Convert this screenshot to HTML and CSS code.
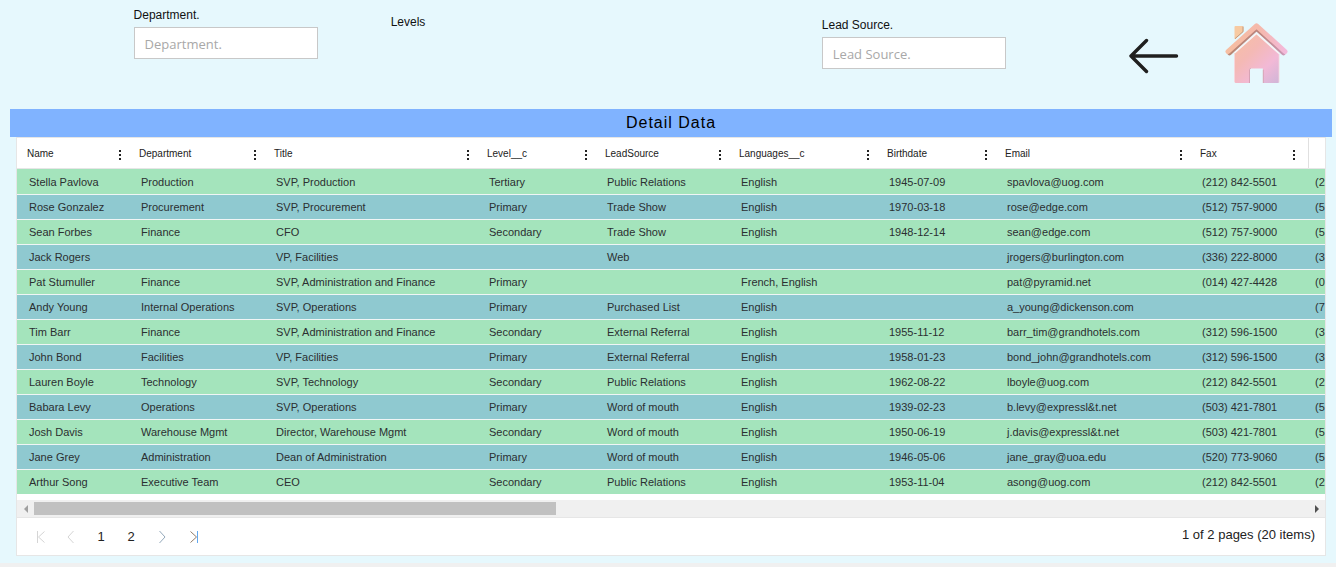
FILE: index.html
```
<!DOCTYPE html>
<html lang="en">
<head>
<meta charset="utf-8">
<title>Detail Data</title>
<link rel="stylesheet" href="styles.css">
</head>
<body>
<header class="filters">
  <div class="field field-department">
    <label for="department">Department.</label>
    <input id="department" type="text" placeholder="Department.">
  </div>
  <div class="levels">Levels</div>
  <div class="field field-source">
    <label for="source">Lead Source.</label>
    <input id="source" type="text" placeholder="Lead Source.">
  </div>
  <button class="nav-button nav-back" type="button" aria-label="Back">
    <svg width="50" height="38" viewBox="0 0 50 38" fill="none" stroke="#20201f" stroke-width="3.4" stroke-linecap="round" stroke-linejoin="round"><path d="M2 19H47.500M17.500 3.500L2 19L17.500 34.500"/></svg>
  </button>
  <button class="nav-button nav-home" type="button" aria-label="Home">
    <svg width="64" height="64" viewBox="0 0 64 64">
      <defs>
        <linearGradient id="wall" x1="0.1" y1="0" x2="1" y2="1"><stop offset="0" stop-color="#f6bfa5"/><stop offset=".35" stop-color="#f4b9b5"/><stop offset=".68" stop-color="#f2b9d6"/><stop offset="1" stop-color="#d0b5d8"/></linearGradient>
        <linearGradient id="roof" x1="0" y1="0" x2="1" y2="0"><stop offset="0" stop-color="#f6bea2"/><stop offset=".55" stop-color="#f5b9ab"/><stop offset="1" stop-color="#f3b9da"/></linearGradient>
        <linearGradient id="edge" x1="0" y1="0" x2="1" y2="0"><stop offset="0" stop-color="#b98673"/><stop offset=".6" stop-color="#bd8580"/><stop offset="1" stop-color="#cb98b5"/></linearGradient>
      </defs>
      <path d="M9.500 5Q9.500 4 10.500 4H17.500L18.500 5V9.500L10.500 17H9.500Z" fill="#f7caa2"/>
      <path d="M18 4.500V9.700L10 16.700" fill="none" stroke="#c39a80"/>
      <path d="M4.500 31L31.500 6.500L58.500 31" fill="none" stroke="url(#edge)" stroke-width="4.500" stroke-linecap="round" stroke-linejoin="round"/>
      <path d="M3 29.500L31.500 3.800L60 29.500" fill="none" stroke="url(#roof)" stroke-width="5" stroke-linecap="round" stroke-linejoin="round"/>
      <path d="M9.500 31L31.500 11.500L54 31.500V60Q54 61 53 61H38.300V47.500Q38.300 46.500 37.300 46.500H25.500Q24.500 46.500 24.500 47.500V61H11Q9.500 61 9.500 59.500Z" fill="url(#wall)"/>
      <path d="M9.500 31L31.500 11.500L54 31.500" fill="none" stroke="#f7f4f6" stroke-width="1.400"/>
      <path d="M9.500 32V60M54 32V60.500" fill="none" stroke="#f7d6dc" stroke-width=".8"/>
      <path d="M24.500 61V47.700Q24.500 46.500 25.700 46.500M38.300 47.500V61" fill="none" stroke="#d49caf" stroke-width=".9"/>
    </svg>
  </button>
</header>

<main class="report">
  <h1 class="report-title">Detail Data</h1>
  <section class="grid-panel">
    <div class="grid-view">
      <table class="grid">
        <colgroup><col class="c-name"><col class="c-dept"><col class="c-title"><col class="c-level"><col class="c-source"><col class="c-lang"><col class="c-birth"><col class="c-email"><col class="c-fax"><col class="c-last"></colgroup>
        <thead><tr id="head"></tr></thead>
        <tbody id="rows"></tbody>
      </table>
    </div>
    <div class="scrollbar">
      <span class="arrow arrow-left"></span>
      <div class="track"><div class="thumb"></div></div>
      <span class="arrow arrow-right"></span>
    </div>
    <footer class="pager">
      <nav class="pages" aria-label="Pages">
        <button type="button" disabled aria-label="First page"><svg width="12" height="14" viewBox="0 0 12 14"><path d="M2.500 1V13M9.500 1.500L3.500 7L9.500 12.500"/></svg></button>
        <button type="button" disabled aria-label="Previous page"><svg width="12" height="14" viewBox="0 0 12 14"><path d="M8.500 1L3 7L8.500 13"/></svg></button>
        <button type="button">1</button>
        <button type="button">2</button>
        <button type="button" class="next" aria-label="Next page"><svg width="12" height="14" viewBox="0 0 12 14"><path d="M3.500 1L9 7L3.500 13"/></svg></button>
        <button type="button" class="last" aria-label="Last page"><svg width="12" height="14" viewBox="0 0 12 14"><path d="M2.500 1.500L8.500 7L2.500 12.500"/><path class="bar" d="M9.500 1V13"/></svg></button>
      </nav>
      <span class="summary">1 of 2 pages (20 items)</span>
    </footer>
  </section>
</main>
<div class="page-end"></div>
<script src="grid.js"></script>
</body>
</html>
```
FILE: styles.css
```
* { box-sizing: border-box; }

body {
  margin: 0;
  min-height: 100vh;
  display: flex;
  flex-direction: column;
  background: #e6f8fd;
  color: #111;
  font-family: "Liberation Sans", Arial, sans-serif;
  font-size: 12px;
}

button {
  border: 0;
  padding: 0;
  background: none;
  color: inherit;
  font: inherit;
}

.filters {
  display: grid;
  grid-template-columns: 257fr 431fr 307fr 96fr 111fr;
  align-items: start;
  padding-left: 10%;
  height: 109px;
}

.field {
  display: flex;
  flex-direction: column;
  gap: 4px;
  width: 184px;
  line-height: 16px;
}

.field-department { padding-top: 7px; }
.field-source { padding-top: 17px; }
.levels { padding-top: 14px; line-height: 16px; }

.field input {
  height: 32px;
  padding: 2px 10px 0;
  border: 1px solid #c8c8c8;
  background: #fff;
  font: 13px "Open Sans", "Noto Sans", sans-serif;
}

.field input::placeholder { color: #a8a8a8; opacity: 1; }

.nav-button { justify-self: start; }
.nav-button svg { display: block; }
.nav-back { padding-top: 37px; }
.nav-home { padding-top: 22px; }

.report { margin: 0 4px 0 10px; }

.report-title {
  margin: 0;
  background: #80b3ff;
  color: #000;
  font-size: 16px;
  font-weight: 400;
  line-height: 28px;
  letter-spacing: 1px;
  text-align: center;
}

.grid-panel {
  margin: 0 6px;
  border: 1px solid #e6e6e6;
  background: #fff;
}

.grid-view { overflow: hidden; padding-bottom: 6px; }

.grid {
  width: 100%;
  min-width: 1400px;
  table-layout: fixed;
  border-collapse: separate;
  border-spacing: 0;
}

.c-name { width: 112px; }
.c-dept { width: 135px; }
.c-title { width: 213px; }
.c-level { width: 118px; }
.c-source { width: 134px; }
.c-lang { width: 148px; }
.c-birth { width: 118px; }
.c-email { width: 195px; }
.c-fax { width: 113px; }

.grid th {
  height: 31px;
  padding: 0 6px 0 10px;
  border-bottom: 1px solid #e6e6e6;
  color: #222;
  font-size: 10px;
  font-weight: 400;
  text-align: left;
}

.head-cell {
  display: flex;
  align-items: center;
  justify-content: space-between;
}

.menu { display: grid; height: 14px; padding: 4px 1px 0; }
.menu svg { display: block; }

.grid .head-end { padding: 0 5px; }
.head-end div { height: 30px; border-left: 1px solid #e0e0e0; }

.grid td {
  height: 25px;
  padding: 0 0 0 12px;
  border-top: 1px solid #f0f5f5;
  color: #2b2f31;
  font-size: 11px;
  white-space: nowrap;
}

.grid tbody tr:first-child td { border-top-color: transparent; }
.grid tbody tr:nth-child(odd) { background: #a4e4bc; }
.grid tbody tr:nth-child(even) { background: #8fc9d0; }

.scrollbar {
  display: flex;
  align-items: center;
  height: 17px;
  background: #f0f0f0;
}

.arrow { display: grid; place-items: center; width: 17px; }
.arrow::before { content: ""; border: 4px solid transparent; }
.arrow-left::before { border-left-width: 0; border-right-color: #a0a0a0; }
.arrow-right::before { border-right-width: 0; border-left-color: #505050; }
.track { flex: 1; }
.thumb { width: 41%; height: 13px; background: #c1c1c1; }

.pager {
  display: flex;
  align-items: center;
  justify-content: space-between;
  height: 38px;
  padding: 0 10px 0 7px;
  border-top: 1px solid #e6e6e6;
  color: #222;
  font-size: 13px;
}

.pages { display: flex; }
.pages button { display: grid; place-items: center; width: 30px; height: 30px; padding-left: 4px; }
.pages .next, .pages .last { width: 32px; }
.pages svg { fill: none; stroke: #d5d5d5; }
.pages .next svg { stroke: #94a9bb; }
.pages .last svg { stroke: #927c68; }
.pages .last .bar { stroke: #62a8ee; }
.summary { padding-bottom: 4px; }

.page-end { height: 4px; margin-top: auto; background: #f0f0f0; }
```
FILE: grid.js
```
const columns = ["Name", "Department", "Title", "Level__c", "LeadSource", "Languages__c", "Birthdate", "Email", "Fax"];

const records = [
  ["Stella Pavlova", "Production", "SVP, Production", "Tertiary", "Public Relations", "English", "1945-07-09", "spavlova@uog.com", "(212) 842-5501", "(2"],
  ["Rose Gonzalez", "Procurement", "SVP, Procurement", "Primary", "Trade Show", "English", "1970-03-18", "rose@edge.com", "(512) 757-9000", "(5"],
  ["Sean Forbes", "Finance", "CFO", "Secondary", "Trade Show", "English", "1948-12-14", "sean@edge.com", "(512) 757-9000", "(5"],
  ["Jack Rogers", "", "VP, Facilities", "", "Web", "", "", "jrogers@burlington.com", "(336) 222-8000", "(3"],
  ["Pat Stumuller", "Finance", "SVP, Administration and Finance", "Primary", "", "French, English", "", "pat@pyramid.net", "(014) 427-4428", "(0"],
  ["Andy Young", "Internal Operations", "SVP, Operations", "Primary", "Purchased List", "English", "", "a_young@dickenson.com", "", "(7"],
  ["Tim Barr", "Finance", "SVP, Administration and Finance", "Secondary", "External Referral", "English", "1955-11-12", "barr_tim@grandhotels.com", "(312) 596-1500", "(3"],
  ["John Bond", "Facilities", "VP, Facilities", "Primary", "External Referral", "English", "1958-01-23", "bond_john@grandhotels.com", "(312) 596-1500", "(3"],
  ["Lauren Boyle", "Technology", "SVP, Technology", "Secondary", "Public Relations", "English", "1962-08-22", "lboyle@uog.com", "(212) 842-5501", "(2"],
  ["Babara Levy", "Operations", "SVP, Operations", "Primary", "Word of mouth", "English", "1939-02-23", "b.levy@expressl&t.net", "(503) 421-7801", "(5"],
  ["Josh Davis", "Warehouse Mgmt", "Director, Warehouse Mgmt", "Secondary", "Word of mouth", "English", "1950-06-19", "j.davis@expressl&t.net", "(503) 421-7801", "(5"],
  ["Jane Grey", "Administration", "Dean of Administration", "Primary", "Word of mouth", "English", "1946-05-06", "jane_gray@uoa.edu", "(520) 773-9060", "(5"],
  ["Arthur Song", "Executive Team", "CEO", "Secondary", "Public Relations", "English", "1953-11-04", "asong@uog.com", "(212) 842-5501", "(2"]
];

const head = document.getElementById("head");
head.innerHTML = columns.map((name) =>
  `<th scope="col"><div class="head-cell">${name}<button class="menu" type="button" aria-label="${name} menu"><svg width="4" height="10" viewBox="0 0 4 10" fill="#222"><path d="M1 0h2v2h-2zM1 4h2v2h-2zM1 8h2v2h-2z"/></svg></button></div></th>`
).join("") + '<th class="head-end"><div></div></th>';

const body = document.getElementById("rows");
for (const record of records) {
  const row = body.insertRow();
  for (const value of record) {
    row.insertCell().textContent = value;
  }
}
```
